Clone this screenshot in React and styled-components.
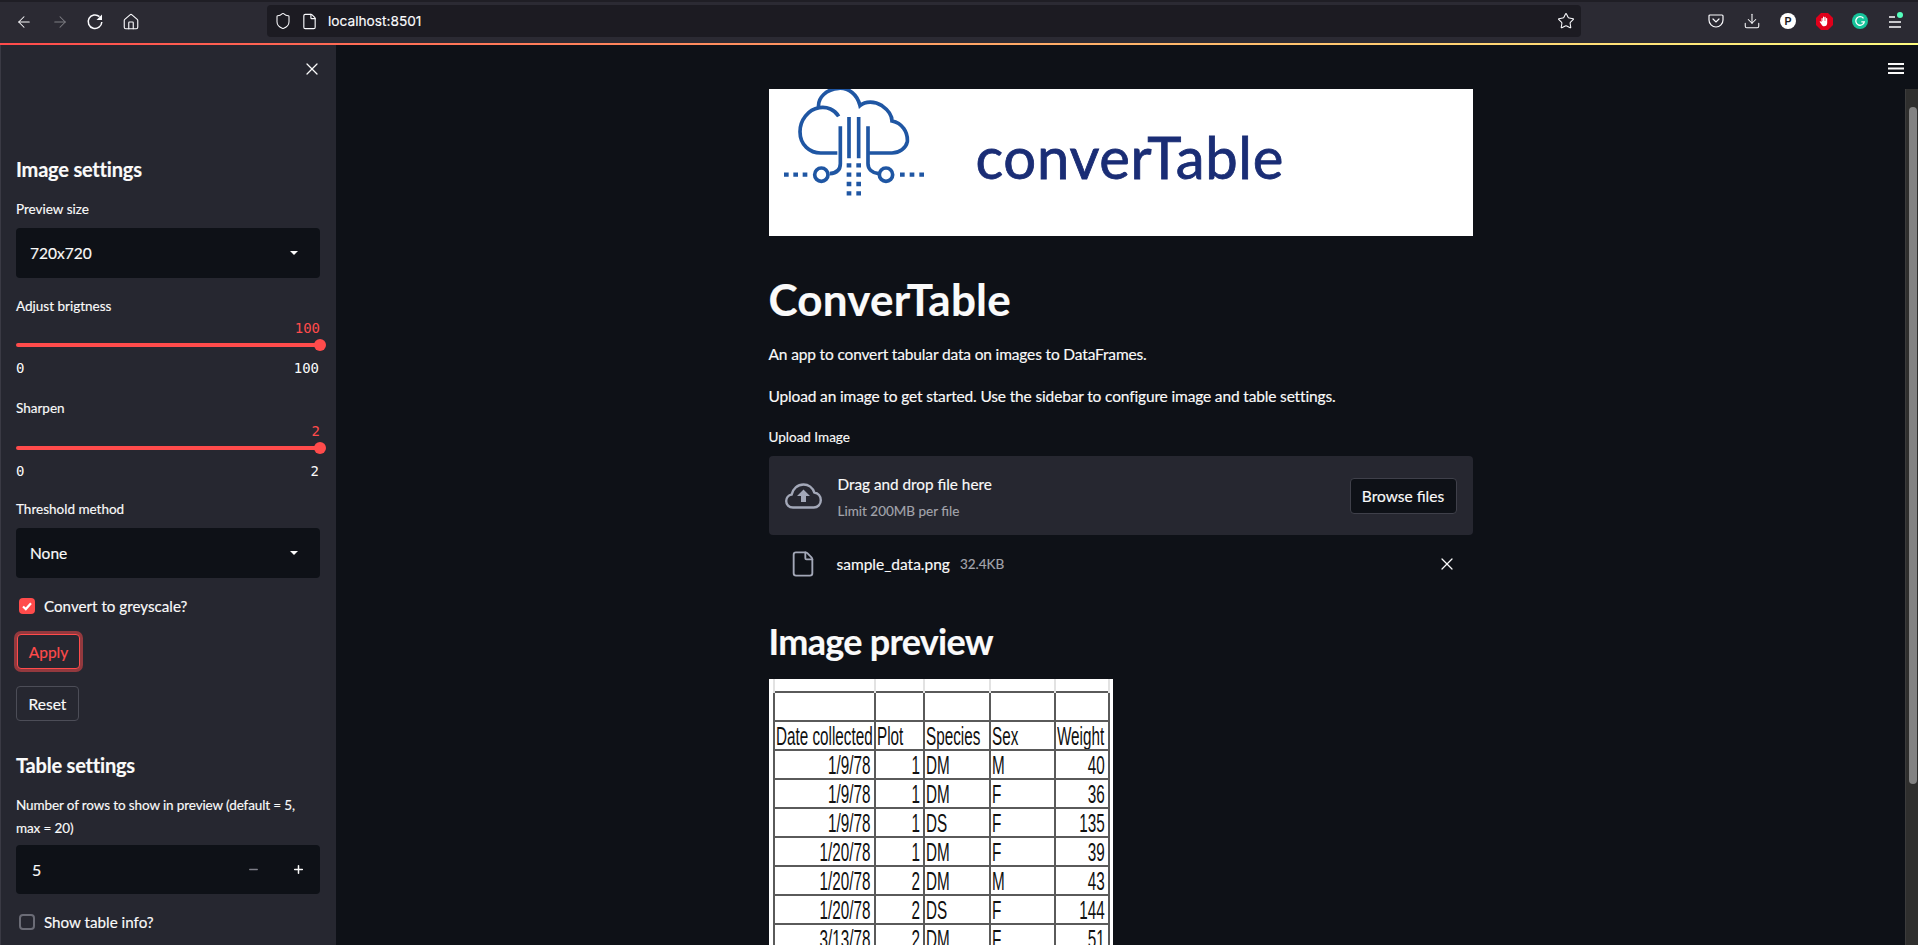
import React from 'react';
import styled, { createGlobalStyle } from 'styled-components';
import { X, ArrowLeft, ArrowRight, Home, Shield, File, Star, Download, Plus, Minus } from 'lucide-react';

const UI_FONT = '"Lato", "Noto Sans", sans-serif';

const GlobalStyle = createGlobalStyle`
  html, body {
    margin: 0;
    height: 945px;
    overflow: hidden;
    background: #0e1117;
    font-family: ${UI_FONT};
    color: #fafafa;
    -webkit-text-stroke: 0.15px currentColor;
  }
  * { box-sizing: border-box; }
`;

const Page = styled.div`
  width: 1918px;
  height: 945px;
  display: flex;
  flex-direction: column;
  overflow: hidden;
`;

/* browser toolbar */
const Toolbar = styled.header`
  height: 43px;
  flex: none;
  background: #2b2a33;
  border-top: 2px solid #1f1e25;
  display: flex;
  align-items: center;
  padding: 0 12px 3px 15px;
  color: #fbfbfe;
`;

const NavIcons = styled.div`
  display: flex;
  gap: 17.5px;
  width: 252px;
  flex: none;
  padding-top: 1px;
`;

const NavSlot = styled.span`
  display: flex;
  width: 18px;
  height: 18px;
  align-items: center;
  justify-content: center;
  opacity: ${(p) => (p.$dim ? 0.4 : 1)};
`;

const UrlBar = styled.div`
  width: 1314px;
  height: 32px;
  flex: none;
  background: #1c1b22;
  border-radius: 4px;
  display: flex;
  align-items: center;
  padding: 0 6px 0 7px;
  gap: 9px;
  font-family: "Inter", sans-serif;
  font-size: 13.7px;
`;

const UrlText = styled.span`
  flex: 1;
  margin-left: 1px;
`;

const Extensions = styled.div`
  flex: 1;
  display: flex;
  justify-content: flex-end;
  align-items: center;
  gap: 16px;
`;

const ExtSlot = styled.span`
  display: flex;
  width: 20px;
  height: 20px;
  align-items: center;
  justify-content: center;
`;

const Decoration = styled.div`
  height: 2px;
  flex: none;
  background: linear-gradient(90deg, #ff4b4b, #fffd80);
`;

const Body = styled.div`
  flex: 1;
  display: flex;
  min-height: 0;
`;

/* sidebar */
const Sidebar = styled.aside`
  width: 336px;
  flex: none;
  background: #262730;
  border-left: 1px solid #3a3a44;
  padding: 0 15px;
  position: relative;
`;

const CloseBtn = styled.button`
  position: absolute;
  top: 14px;
  right: 14px;
  display: flex;
  padding: 0;
  background: none;
  border: 0;
  color: #fafafa;
`;

const SideHeading = styled.h3`
  margin: 0;
  font-size: 20px;
  font-weight: 700;
  line-height: 28px;
  letter-spacing: -0.2px;
  padding-top: ${(p) => p.$top}px;
`;

const FieldLabel = styled.div`
  font-size: 13.5px;
  line-height: ${(p) => p.$lh || 20}px;
  letter-spacing: ${(p) => (p.$tight ? '-0.12px' : '0')};
  padding-top: ${(p) => p.$top || 0}px;
  margin-bottom: ${(p) => p.$bottom || 0}px;
`;

const Select = styled.div`
  height: 50px;
  width: 304px;
  background: #0e1117;
  border-radius: 4px;
  display: flex;
  align-items: center;
  justify-content: space-between;
  padding: 0 22px 0 14px;
  font-size: 15.5px;
`;

const Caret = styled.span`
  width: 0;
  height: 0;
  border-left: 4px solid transparent;
  border-right: 4px solid transparent;
  border-top: 4px solid #fafafa;
`;

const SliderBlock = styled.div`
  width: 304px;
  font-family: "DejaVu Sans Mono", "Liberation Mono", monospace;
  font-size: 14px;
  line-height: 18px;
  -webkit-text-stroke: 0;
`;

const SliderValue = styled.div`
  text-align: right;
  color: #ff4b4b;
  font-size: 14px;
  margin-top: ${(p) => p.$top}px;
`;

const Track = styled.div`
  position: relative;
  height: 4px;
  margin-top: 6px;
  background: #ff4b4b;
  border-radius: 2px;
`;

const Thumb = styled.span`
  position: absolute;
  right: -6px;
  top: -4px;
  width: 12px;
  height: 12px;
  border-radius: 50%;
  background: #ff4b4b;
`;

const SliderRange = styled.div`
  display: flex;
  justify-content: space-between;
  margin-top: 12px;
  padding-right: 1px;
`;

const CheckRow = styled.label`
  display: flex;
  align-items: center;
  gap: 9px;
  padding-left: 3px;
  font-size: 15.2px;
  height: 20px;
  margin-top: ${(p) => p.$top}px;
`;

const CheckBox = styled.span`
  width: 16px;
  height: 16px;
  border-radius: 4px;
  display: flex;
  align-items: center;
  justify-content: center;
  background: ${(p) => (p.$checked ? '#ff4b4b' : 'transparent')};
  border: ${(p) => (p.$checked ? '0' : '2px solid #6b6c76')};
`;

const ApplyBtn = styled.button`
  display: block;
  width: 63px;
  height: 35px;
  margin: 18px 0 0 1px;
  border: 1px solid #ff4b4b;
  border-radius: 4px;
  background: #262730;
  box-shadow: 0 0 0 3px rgba(255, 75, 75, 0.5);
  color: #ff4b4b;
  font: 15.5px ${UI_FONT};
  padding: 0;
`;

const ResetBtn = styled.button`
  display: block;
  width: 63px;
  height: 35px;
  margin: 17px 0 0 0;
  border: 1px solid #4c4d57;
  border-radius: 4px;
  background: #262730;
  color: #fafafa;
  font: 15.5px ${UI_FONT};
  padding: 0;
`;

const NumberInput = styled.div`
  width: 304px;
  height: 49px;
  background: #0e1117;
  border-radius: 4px;
  display: flex;
  align-items: center;
  padding: 0 14px 0 16px;
  font-size: 16px;
`;

const NumberValue = styled.span`
  flex: 1;
`;

const StepBtn = styled.span`
  display: flex;
  width: 16px;
  justify-content: center;
  margin-left: 29px;
  color: ${(p) => (p.$muted ? '#7d7e87' : '#fafafa')};
`;

/* main column */
const Main = styled.main`
  flex: 1;
  display: flex;
  min-width: 0;
  position: relative;
`;

const HeaderMenu = styled.svg`
  position: absolute;
  top: 18px;
  right: 14px;
  width: 16px;
  height: 11px;
`;

const Content = styled.div`
  flex: 1;
  display: flex;
  justify-content: center;
  overflow: hidden;
`;

const Column = styled.div`
  width: 704px;
  padding-top: 44px;
`;

const Banner = styled.div`
  height: 147px;
  background: #fff;
  display: flex;
  align-items: flex-start;
  overflow: hidden;
  padding-left: 11px;
`;

const LogoMark = styled.svg`
  width: 170px;
  height: 125px;
  margin-top: -4px;
  flex: none;
`;

const Wordmark = styled.span`
  margin: 33px 0 0 26px;
  color: #1a2d75;
  font-family: "Lato", sans-serif;
  font-size: 58px;
  line-height: 70px;
  letter-spacing: 0.7px;
  -webkit-text-stroke: 0.8px #1a2d75;
`;

const Title = styled.h1`
  margin: 36px 0 0;
  font-size: 44px;
  line-height: 54px;
  font-weight: 700;
  letter-spacing: 0.2px;
`;

const Para = styled.p`
  margin: ${(p) => p.$top}px 0 0;
  font-size: 15.5px;
  line-height: 24px;
  letter-spacing: -0.15px;
`;

const UploadLabel = styled.div`
  margin-top: 19px;
  font-size: 13.5px;
  line-height: 20px;
`;

const DropZone = styled.div`
  margin-top: 9px;
  height: 79px;
  background: #262730;
  border-radius: 4px;
  display: flex;
  align-items: center;
  padding: 0 16px;
`;

const DropText = styled.div`
  flex: 1;
  margin-left: 16px;
  padding-top: 3px;
`;

const DropTitle = styled.div`
  font-size: 15.3px;
  line-height: 20px;
`;

const DropHint = styled.div`
  margin-top: 7px;
  font-size: 13.5px;
  line-height: 20px;
  color: #a3a4ac;
`;

const BrowseBtn = styled.button`
  width: 107px;
  height: 36px;
  border: 1px solid #3f404a;
  border-radius: 4px;
  background: #0e1117;
  color: #fafafa;
  font: 15.5px ${UI_FONT};
  padding: 0;
`;

const FileRow = styled.div`
  display: flex;
  align-items: center;
  height: 24px;
  margin-top: 17px;
  padding: 0 16px 0 20px;
`;

const FileName = styled.span`
  margin-left: 20px;
  font-size: 15.5px;
`;

const FileSize = styled.span`
  margin-left: 10px;
  font-size: 13.5px;
  color: #a3a4ac;
  flex: 1;
`;

const Heading2 = styled.h2`
  margin: 42px 0 0;
  font-size: 36px;
  line-height: 46px;
  font-weight: 700;
  letter-spacing: -0.7px;
`;

/* the sample table picture */
const Sheet = styled.div`
  margin-top: 15px;
  width: 344px;
  background: #fff;
  padding: 0 4px;
`;

const SheetTable = styled.table`
  width: 335px;
  border-collapse: collapse;
  table-layout: fixed;
  font-family: "Liberation Sans", sans-serif;
  font-size: 25px;
  color: #111;
  -webkit-text-stroke: 0;
`;

const GhostCell = styled.td`
  height: 13px;
  padding: 0;
  line-height: 0;
  border-left: 2px solid #e2e2e2;
  border-right: 2px solid #e2e2e2;
`;

const SheetCell = styled.td`
  height: 29px;
  padding: 1px 3px 0 1px;
  border: 2px solid #5a5a5a;
  text-align: ${(p) => (p.$right ? 'right' : 'left')};
  white-space: nowrap;
  overflow: hidden;
  line-height: 26px;
`;

const Squeeze = styled.span`
  display: inline-block;
  transform: scaleX(0.61);
  transform-origin: ${(p) => (p.$right ? 'right' : 'left')} center;
`;

const ScrollTrack = styled.div`
  width: 13px;
  flex: none;
  margin-top: 44px;
  background: #2f2f2e;
  border-left: 1px solid #3c3c3c;
  padding: 18px 1px 0 3px;
`;

const ScrollThumb = styled.div`
  height: 677px;
  background: #838383;
  border-radius: 4px;
`;

const Reload = () => (
  <svg width="18" height="18" viewBox="0 0 18 18" fill="none">
    <path d="M13.500 3.600A6.800 6.800 0 1 0 15.800 9" stroke="#fbfbfe" strokeWidth="1.500" />
    <path d="M16 1.500v5.500h-5.500z" fill="#fbfbfe" />
  </svg>
);

const Pocket = () => (
  <svg width="16" height="16" viewBox="0 0 16 16" fill="none" stroke="#fbfbfe" strokeWidth="1.2">
    <path d="M2 2h12a1 1 0 0 1 1 1v4a7 7 0 0 1-14 0V3a1 1 0 0 1 1-1z" />
    <path d="M5 6l3 3 3-3" strokeLinecap="round" />
  </svg>
);

const ProductHunt = () => (
  <svg width="16" height="16" viewBox="0 0 16 16">
    <circle cx="8" cy="8" r="8" fill="#fff" />
    <text x="8" y="11.6" textAnchor="middle" fontFamily="Liberation Sans" fontWeight="700" fontSize="10.5" fill="#1c1b22" stroke="none">P</text>
  </svg>
);

const AdBlock = () => (
  <svg width="17" height="17" viewBox="0 0 17 17">
    <path d="M5 0h7l5 5v7l-5 5H5l-5-5V5z" fill="#e0001b" />
    <path d="M5.500 9V5.500a.6.6 0 0 1 1.200 0V8h.3V4.200a.6.6 0 0 1 1.200 0V8h.3V4.400a.6.6 0 0 1 1.200 0V8h.3V5.500a.6.6 0 0 1 1.200 0V10c0 2-1.200 3.300-3 3.300-1.500 0-2.200-.8-3-2.300L3.800 9c-.4-.7.500-1.200 1-.6z" fill="#fff" />
  </svg>
);

const Grammarly = () => (
  <svg width="16" height="16" viewBox="0 0 16 16">
    <circle cx="8" cy="8" r="8" fill="#15c39a" />
    <path d="M11.500 5.300A4.300 4.300 0 1 0 12.300 8.800H9.300" fill="none" stroke="#fff" strokeWidth="1.300" />
  </svg>
);

const BrowserMenu = () => (
  <svg width="18" height="18" viewBox="0 0 18 18" fill="none">
    <path d="M2 5h6M2 10h12M2 15h12" stroke="#fbfbfe" strokeWidth="1.300" />
    <circle cx="13" cy="3" r="3" fill="#54ffbd" />
  </svg>
);

const CloudLogo = () => (
  <LogoMark viewBox="0 0 510 375" fill="none" stroke="#1f56a3" strokeWidth="11">
    <path d="M176 94c-12-20-35-30-58-26C84 74 60 105 60 140c0 40 30 64 62 64h50" />
    <path d="M116 68C112 38 140 12 176 10c30-2 56 18 64 52 16-14 44-14 66 0 20 14 30 30 30 46 30 6 48 32 46 62-4 20-24 34-46 34h-72" />
    <path d="M181 124v112c0 16-10 28-32 30" />
    <path d="M207 96v124M236 96v124" />
    <path d="M264 124v112c0 16 12 28 32 30" />
    <circle cx="124" cy="269" r="20" />
    <circle cx="318" cy="269" r="20" />
    <path
      d="M12 269h14M40 269h14M68 269h14M360 269h14M389 269h14M418 269h14M200 241h14M229 241h14M200 269h14M229 269h14M200 297h14M229 297h14M200 325h14M229 325h14"
      strokeWidth="13"
    />
  </LogoMark>
);

const CloudUpload = () => (
  <svg width="37" height="26" viewBox="0 0 37 26" fill="none" style={{ flex: 'none' }}>
    <path
      d="M8 24.500C3.800 24.500 1.200 21.500 1.200 18c0-3.300 2.300-6 5.500-6.500C7.800 6 12.500 1.500 18.500 1.500c5 0 9.200 3.300 10.800 8 3.800.5 6.500 3.800 6.500 7.700 0 4-3 7.300-7 7.300z"
      stroke="#a3a8b8"
      strokeWidth="2.400"
    />
    <path d="M18.500 6.500l6.500 6.500h-4v6h-5v-6h-4z" fill="#a3a8b8" />
  </svg>
);

const sheetRows = [
  ['1/9/78', '1', 'DM', 'M', '40'],
  ['1/9/78', '1', 'DM', 'F', '36'],
  ['1/9/78', '1', 'DS', 'F', '135'],
  ['1/20/78', '1', 'DM', 'F', '39'],
  ['1/20/78', '2', 'DM', 'M', '43'],
  ['1/20/78', '2', 'DS', 'F', '144'],
  ['3/13/78', '2', 'DM', 'F', '51'],
];

const colWidths = [101, 49, 66, 65, 54];

function Slider({ value, top }) {
  return (
    <SliderBlock>
      <SliderValue $top={top}>{value}</SliderValue>
      <Track>
        <Thumb />
      </Track>
      <SliderRange>
        <span>0</span>
        <span>{value}</span>
      </SliderRange>
    </SliderBlock>
  );
}

export default function App() {
  return (
    <Page>
      <GlobalStyle />
      <Toolbar>
        <NavIcons>
          <NavSlot><ArrowLeft size={20} strokeWidth={1.4} /></NavSlot>
          <NavSlot $dim><ArrowRight size={20} strokeWidth={1.4} /></NavSlot>
          <NavSlot><Reload /></NavSlot>
          <NavSlot><Home size={18} strokeWidth={1.5} /></NavSlot>
        </NavIcons>
        <UrlBar>
          <Shield size={18} strokeWidth={1.4} />
          <File size={17} strokeWidth={1.6} />
          <UrlText>localhost:8501</UrlText>
          <Star size={18} strokeWidth={1.4} />
        </UrlBar>
        <Extensions>
          <ExtSlot><Pocket /></ExtSlot>
          <ExtSlot><Download size={18} strokeWidth={1.4} /></ExtSlot>
          <ExtSlot><ProductHunt /></ExtSlot>
          <ExtSlot><AdBlock /></ExtSlot>
          <ExtSlot><Grammarly /></ExtSlot>
          <ExtSlot><BrowserMenu /></ExtSlot>
        </Extensions>
      </Toolbar>
      <Decoration />
      <Body>
        <Sidebar>
          <CloseBtn><X size={20} strokeWidth={1.5} /></CloseBtn>
          <SideHeading $top={110}>Image settings</SideHeading>
          <FieldLabel $top={16} $bottom={9}>Preview size</FieldLabel>
          <Select>720x720<Caret /></Select>
          <FieldLabel $top={18}>Adjust brigtness</FieldLabel>
          <Slider value={100} top={3} />
          <FieldLabel $top={21}>Sharpen</FieldLabel>
          <Slider value={2} top={4} />
          <FieldLabel $top={19} $bottom={9}>Threshold method</FieldLabel>
          <Select>None<Caret /></Select>
          <CheckRow $top={18}>
            <CheckBox $checked>
              <svg width="12" height="12" viewBox="0 0 12 12" fill="none" stroke="#fff" strokeWidth="2.200">
                <path d="M2 6.500l2.800 2.600L10 3.200" />
              </svg>
            </CheckBox>
            Convert to greyscale?
          </CheckRow>
          <ApplyBtn>Apply</ApplyBtn>
          <ResetBtn>Reset</ResetBtn>
          <SideHeading $top={30}>Table settings</SideHeading>
          <FieldLabel $top={15} $lh={23} $bottom={5} $tight>
            Number of rows to show in preview (default = 5, max = 20)
          </FieldLabel>
          <NumberInput>
            <NumberValue>5</NumberValue>
            <StepBtn $muted><Minus size={13} strokeWidth={2.4} /></StepBtn>
            <StepBtn><Plus size={13} strokeWidth={2.8} /></StepBtn>
          </NumberInput>
          <CheckRow $top={18}>
            <CheckBox />
            Show table info?
          </CheckRow>
        </Sidebar>
        <Main>
          <HeaderMenu viewBox="0 0 16 11" fill="none" stroke="#fafafa" strokeWidth="2">
            <path d="M0 1h16M0 5.500h16M0 10h16" />
          </HeaderMenu>
          <Content>
            <Column>
              <Banner>
                <CloudLogo />
                <Wordmark>converTable</Wordmark>
              </Banner>
              <Title>ConverTable</Title>
              <Para $top={16}>An app to convert tabular data on images to DataFrames.</Para>
              <Para $top={18}>Upload an image to get started. Use the sidebar to configure image and table settings.</Para>
              <UploadLabel>Upload Image</UploadLabel>
              <DropZone>
                <CloudUpload />
                <DropText>
                  <DropTitle>Drag and drop file here</DropTitle>
                  <DropHint>Limit 200MB per file</DropHint>
                </DropText>
                <BrowseBtn>Browse files</BrowseBtn>
              </DropZone>
              <FileRow>
                <File size={28} strokeWidth={1.6} color="#a3a8b8" />
                <FileName>sample_data.png</FileName>
                <FileSize>32.4KB</FileSize>
                <X size={20} strokeWidth={1.5} />
              </FileRow>
              <Heading2>Image preview</Heading2>
              <Sheet>
                <SheetTable>
                  <colgroup>
                    {colWidths.map((w, i) => <col key={i} style={{ width: w }} />)}
                  </colgroup>
                  <tbody>
                    <tr>{colWidths.map((w, i) => <GhostCell key={i} />)}</tr>
                    <tr>{colWidths.map((w, i) => <SheetCell key={i} />)}</tr>
                    <tr>
                      {['Date collected', 'Plot', 'Species', 'Sex', 'Weight'].map((h) => (
                        <SheetCell key={h}><Squeeze>{h}</Squeeze></SheetCell>
                      ))}
                    </tr>
                    {sheetRows.map((row, r) => (
                      <tr key={r}>
                        {row.map((c, i) => {
                          const right = i === 0 || i === 1 || i === 4;
                          return <SheetCell key={i} $right={right}><Squeeze $right={right}>{c}</Squeeze></SheetCell>;
                        })}
                      </tr>
                    ))}
                  </tbody>
                </SheetTable>
              </Sheet>
            </Column>
          </Content>
          <ScrollTrack><ScrollThumb /></ScrollTrack>
        </Main>
      </Body>
    </Page>
  );
}
